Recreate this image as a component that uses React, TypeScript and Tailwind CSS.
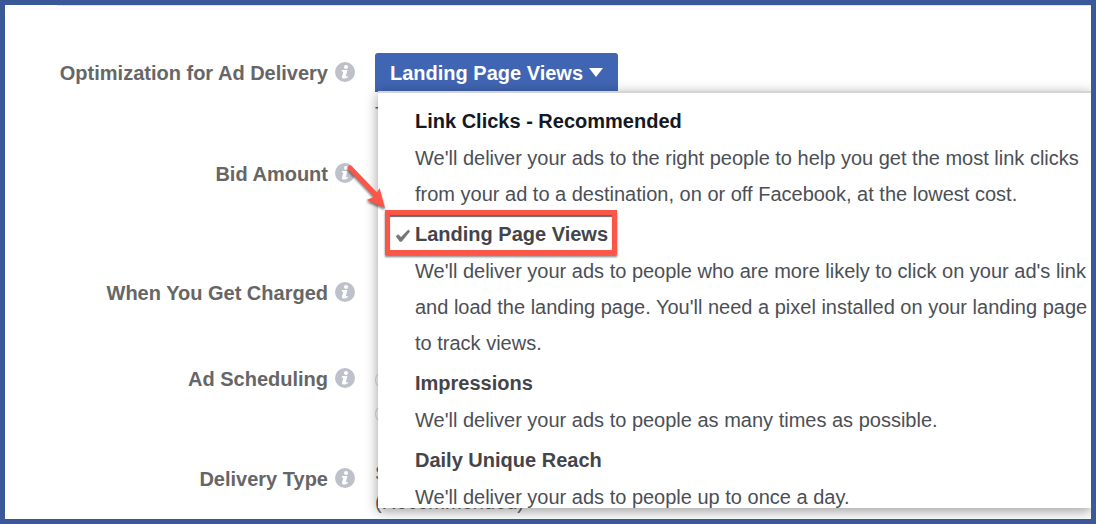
import { ReactNode, useState } from "react";

type Option = {
    id: string;
    title: string;
    description: string;
    strong?: boolean;
};

const options: Option[] = [
    {
        id: "clicks",
        title: "Link Clicks - Recommended",
        description:
            "We'll deliver your ads to the right people to help you get the most link clicks from your ad to a destination, on or off Facebook, at the lowest cost.",
        strong: true,
    },
    {
        id: "landing",
        title: "Landing Page Views",
        description:
            "We'll deliver your ads to people who are more likely to click on your ad's link and load the landing page. You'll need a pixel installed on your landing page to track views.",
    },
    {
        id: "impressions",
        title: "Impressions",
        description: "We'll deliver your ads to people as many times as possible.",
    },
    {
        id: "reach",
        title: "Daily Unique Reach",
        description: "We'll deliver your ads to people up to once a day.",
    },
];

function InfoIcon() {
    return (
        <svg className="mb-0.5 h-5 w-5 shrink-0" viewBox="0 0 20 20" aria-hidden="true">
            <circle cx="10" cy="10" r="10" fill="#bdc1c9" />
            <circle cx="11" cy="5" r="2" fill="#fff" />
            <path
                d="M7 8h5.4l-1.5 5.8c-.1.6.4.7 1.8.1l.3 1c-1.3 1.1-2.7 1.7-4 1.7-1.6 0-2.3-.9-1.9-2.3l1.1-3.8c.1-.7-.2-.9-1.6-1z"
                fill="#fff"
            />
        </svg>
    );
}

function CheckIcon() {
    return (
        <svg className="mt-1 h-4 w-4" viewBox="0 0 16 16" aria-hidden="true">
            <path d="M.8 8.2 3.2 6.2 6 9 13.4 1.6 15 3.4 6.6 13.8 4.8 13.8z" fill="#777" />
        </svg>
    );
}

function Arrow() {
    return (
        <svg
            className="pointer-events-none absolute -top-[54px] -left-[45px] h-12 w-12 drop-shadow-[0_2px_1px_rgba(0,0,0,0.5)]"
            viewBox="0 0 48 48"
            aria-hidden="true"
        >
            <path d="M5 7 32 35" stroke="#fb5648" strokeWidth="5" strokeLinecap="round" />
            <path d="M40 47 21.5 39 30 35.5 34.5 27z" fill="#fb5648" />
        </svg>
    );
}

function Row({ label, className, children }: { label: string; className: string; children?: ReactNode }) {
    return (
        <div className={`flex ${className}`}>
            <div className="flex h-10 w-[350px] shrink-0 items-center justify-end gap-[7px]">
                <span className="text-xl font-bold text-[#666]">{label}</span>
                <InfoIcon />
            </div>
            <div className="relative ml-5 min-w-0 flex-1">{children}</div>
        </div>
    );
}

export default function App() {
    const [selected, setSelected] = useState("landing");
    const current = options.find((option) => option.id === selected);

    return (
        <div className="h-screen overflow-hidden border-[5px] border-[#3b5998] bg-white font-['Liberation_Sans',Arial,sans-serif]">
            <div className="ml-[52px] h-px bg-[#e4e4e6]" />

            <Row label="Optimization for Ad Delivery" className="mt-[47px] h-[101px]">
                <button
                    type="button"
                    aria-haspopup="listbox"
                    aria-expanded="true"
                    className="flex h-[39px] items-center gap-1.5 rounded-t-[3px] bg-[#4065b3] px-[15px] text-xl font-bold text-white"
                >
                    {current?.title}
                    <svg className="h-[9px] w-[14px]" viewBox="0 0 14 9" aria-hidden="true">
                        <path d="M0 0h14L7 9z" fill="#fff" />
                    </svg>
                </button>
                <p className="mt-2 text-xl text-[#666]">T</p>

                <div className="absolute top-[38px] right-0 left-[3px] z-10 h-[417px] border-t-2 border-[#d5d5d5] bg-white shadow-[0_3px_12px_rgba(0,0,0,0.4)]">
                    <ul
                        role="listbox"
                        aria-label="Optimization for Ad Delivery"
                        className="h-full overflow-hidden pt-[9px]"
                    >
                        {options.map((option) => (
                            <li
                                key={option.id}
                                role="option"
                                aria-selected={option.id === selected}
                                onClick={() => setSelected(option.id)}
                                className="mb-[3px] cursor-pointer pl-[37px] text-xl"
                            >
                                <div
                                    className={`flex h-[38px] items-center font-bold ${
                                        option.strong ? "text-[#141823]" : "text-[#444549]"
                                    }`}
                                >
                                    {option.id === selected && (
                                        <span className="-ml-5 w-5">
                                            <CheckIcon />
                                        </span>
                                    )}
                                    {option.title}
                                </div>
                                <p className="leading-9 text-[#4b4f56]">{option.description}</p>
                            </li>
                        ))}
                    </ul>
                    <div className="pointer-events-none absolute top-[117px] left-[7px] h-[45px] w-[232px] border-[5px] border-[#fb5648] shadow-[0_2px_2px_rgba(0,0,0,0.5),inset_0_2px_1px_rgba(0,0,0,0.6)]">
                        <Arrow />
                    </div>
                </div>
            </Row>

            <Row label="Bid Amount" className="h-[119px]" />
            <Row label="When You Get Charged" className="h-[86px]" />
            <Row label="Ad Scheduling" className="h-[100px]">
                <div className="flex flex-col gap-4 pt-3">
                    <input
                        type="radio"
                        name="schedule"
                        aria-label="Continuous"
                        className="h-[18px] w-[18px] appearance-none rounded-full border border-gray-300"
                    />
                    <input
                        type="radio"
                        name="schedule"
                        aria-label="Scheduled"
                        className="h-[18px] w-[18px] appearance-none rounded-full border border-gray-300"
                    />
                </div>
            </Row>
            <Row label="Delivery Type" className="h-20">
                <p className="text-xl leading-[29px] text-[#666]">
                    Standard
                    <br />
                    (Recommended)
                </p>
            </Row>
        </div>
    );
}
